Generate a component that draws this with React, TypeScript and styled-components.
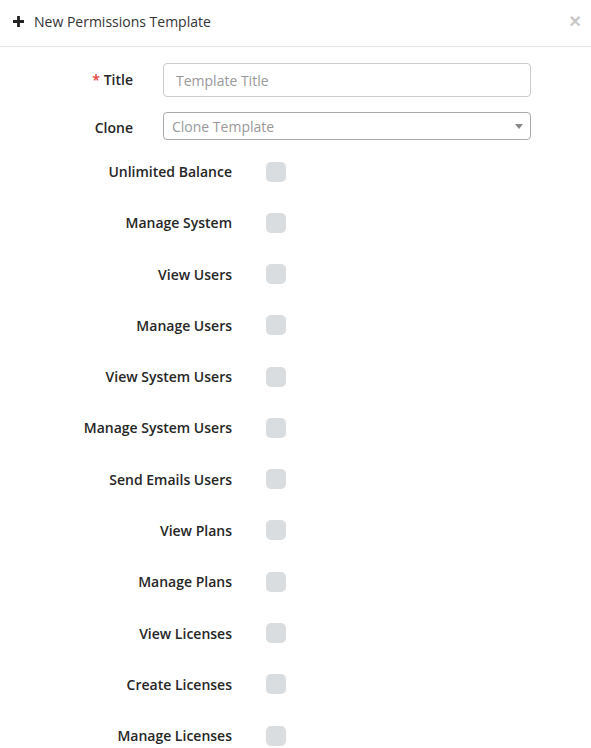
import React from "react";
import styled, { createGlobalStyle } from "styled-components";

const GlobalStyle = createGlobalStyle`
  body {
    margin: 0;
    background: #fff;
    font-family: "Open Sans", "Liberation Sans", sans-serif;
    font-size: 14px;
    color: #333;
  }
`;

const permissions = [
  "Unlimited Balance",
  "Manage System",
  "View Users",
  "Manage Users",
  "View System Users",
  "Manage System Users",
  "Send Emails Users",
  "View Plans",
  "Manage Plans",
  "View Licenses",
  "Create Licenses",
  "Manage Licenses",
];

export default function App() {
  return (
    <>
      <GlobalStyle />
      <Modal>
        <Header>
          <HeaderTitle>
            <PlusIcon viewBox="0 0 11 11">
              <path d="M5.5 0v11M0 5.5h11" stroke="#222" strokeWidth="2.8" />
            </PlusIcon>
            New Permissions Template
          </HeaderTitle>
          <Close>×</Close>
        </Header>

        <Body>
          <FieldRow>
            <FieldLabel>
              <Required>*</Required> Title
            </FieldLabel>
            <TextInput placeholder="Template Title" />
          </FieldRow>

          <FieldRow $compact>
            <FieldLabel $offset>Clone</FieldLabel>
            <Select>
              <SelectText>Clone Template</SelectText>
              <Caret />
            </Select>
          </FieldRow>

          <CheckList>
            {permissions.map((p) => (
              <CheckRow key={p}>
                <CheckLabel>{p}</CheckLabel>
                <Check />
              </CheckRow>
            ))}
          </CheckList>
        </Body>
      </Modal>
    </>
  );
}

const Modal = styled.div`
  width: 591px;
  height: 748px;
  overflow: hidden;
`;

const Header = styled.div`
  box-sizing: border-box;
  height: 47px;
  border-bottom: 1px solid #e5e5e5;
  display: flex;
  align-items: center;
  justify-content: space-between;
  padding: 0 10px 4px 13px;
`;

const HeaderTitle = styled.div`
  display: flex;
  align-items: center;
  gap: 10px;
  font-size: 14px;
  color: #333;
`;

const PlusIcon = styled.svg`
  width: 11px;
  height: 11px;
`;

const Close = styled.span`
  font-family: "Liberation Sans", Arial, sans-serif;
  font-size: 20px;
  font-weight: 700;
  color: #c8c8c8;
  line-height: 1;
  margin-top: -1px;
`;

const Body = styled.div`
  padding-top: 16px;
`;

const FieldRow = styled.div<{ $compact?: boolean }>`
  display: grid;
  grid-template-columns: 133px 368px;
  column-gap: 30px;
  align-items: start;
  margin-bottom: ${(p) => (p.$compact ? "6px" : "15px")};
`;

const FieldLabel = styled.label<{ $offset?: boolean }>`
  text-align: right;
  font-weight: 600;
  color: #262626;
  line-height: 20px;
  padding-top: ${(p) => (p.$offset ? "6px" : "7px")};
`;

const Required = styled.span`
  color: #e0423a;
`;

const TextInput = styled.input`
  box-sizing: border-box;
  height: 34px;
  width: 100%;
  border: 1px solid #ccc;
  border-radius: 4px;
  padding: 0 12px;
  font-family: inherit;
  font-size: 14px;
  color: #555;
  outline: none;
  &::placeholder {
    color: #999;
  }
`;

const Select = styled.div`
  box-sizing: border-box;
  height: 28px;
  border: 1px solid #aaa;
  border-radius: 4px;
  display: flex;
  align-items: center;
  justify-content: space-between;
  padding: 0 7px 0 8px;
`;

const SelectText = styled.span`
  color: #999;
`;

const Caret = styled.span`
  width: 0;
  height: 0;
  border-style: solid;
  border-width: 5px 4px 0 4px;
  border-color: #888 transparent transparent transparent;
`;

const CheckList = styled.div`
  display: flex;
  flex-direction: column;
`;

const CheckRow = styled.div`
  display: grid;
  grid-template-columns: 232px 20px;
  column-gap: 34px;
  align-items: center;
  height: 51.27px;
`;

const CheckLabel = styled.span`
  text-align: right;
  font-weight: 600;
  color: #262626;
`;

const Check = styled.span`
  width: 20px;
  height: 20px;
  border-radius: 5px;
  background: #d9dde0;
`;
